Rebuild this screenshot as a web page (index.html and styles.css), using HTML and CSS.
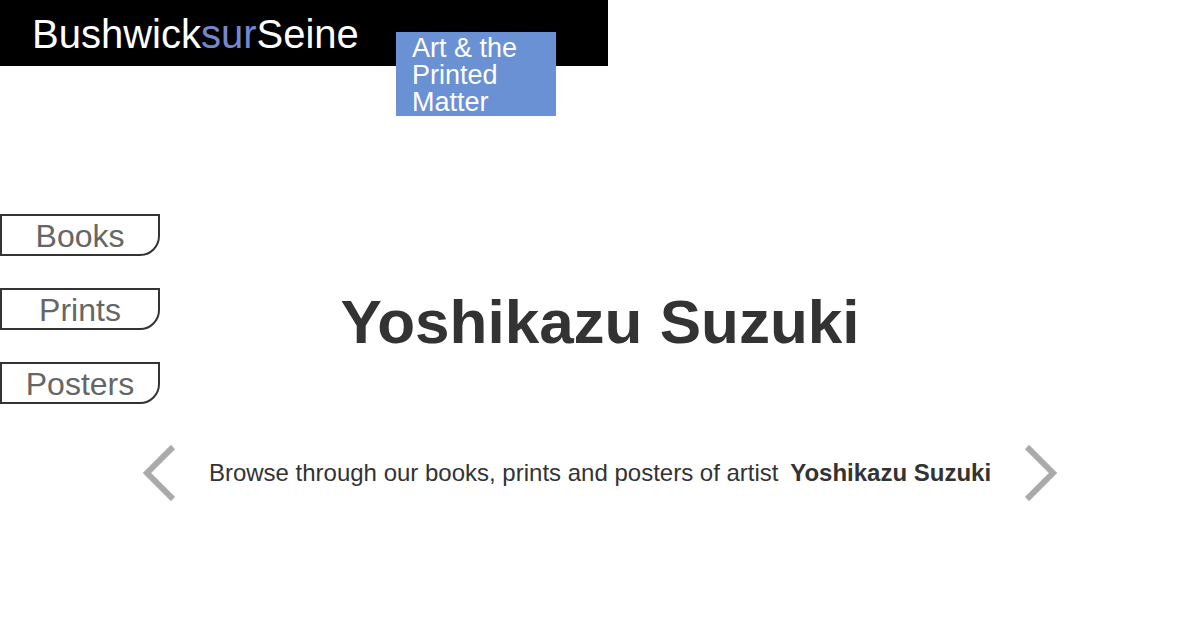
FILE: index.html
```html
<!DOCTYPE html>
<html lang="en">
<head>
<meta charset="utf-8">
<meta name="viewport" content="width=device-width, initial-scale=1">
<title>BushwicksurSeine</title>
<link rel="stylesheet" href="styles.css">
</head>
<body>
<header class="site-header">
  <a class="brand" href="#">Bushwick<span class="brand-accent">sur</span>Seine</a>
  <p class="tagline">Art &amp; the Printed Matter</p>
</header>
<div class="page">
  <nav class="categories" aria-label="Categories">
    <a class="category" href="#books">Books</a>
    <a class="category" href="#prints">Prints</a>
    <a class="category" href="#posters">Posters</a>
  </nav>
  <main class="artist">
    <h1 class="artist-name">Yoshikazu Suzuki</h1>
    <div class="browser">
      <button class="arrow" type="button" aria-label="Previous">
        <svg class="arrow-icon" viewBox="0 0 32 56" aria-hidden="true"><path d="M30 2 L4 28 L30 54"/></svg>
      </button>
      <p class="intro">Browse through our books, prints and posters of artist <strong class="intro-name">Yoshikazu Suzuki</strong></p>
      <button class="arrow" type="button" aria-label="Next">
        <svg class="arrow-icon" viewBox="0 0 32 56" aria-hidden="true"><path d="M2 2 L28 28 L2 54"/></svg>
      </button>
    </div>
  </main>
</div>
</body>
</html>
```
FILE: styles.css
```css
* {
  box-sizing: border-box;
}

body {
  margin: 0;
  background: #fff;
  color: #333;
  font-family: "Liberation Sans", Arial, sans-serif;
}

.site-header {
  position: relative;
  display: flex;
  align-items: center;
  width: 608px;
  max-width: 100%;
  padding: 14px 32px 12px;
  background: #000;
}

.brand {
  color: #fff;
  font-size: 40px;
  line-height: 40px;
  text-decoration: none;
}

.brand-accent {
  color: #7388d0;
}

.tagline {
  position: absolute;
  top: 32px;
  left: 396px;
  width: 160px;
  margin: 0;
  padding: 3px 16px 0;
  background: #6a91d4;
  color: #fff;
  font-size: 27px;
  line-height: 27px;
}

.page {
  display: grid;
  grid-template-columns: 160px 1fr;
  padding-top: 148px;
}

.categories {
  display: flex;
  flex-direction: column;
  grid-area: 1 / 1;
  gap: 32px;
  z-index: 1;
}

.category {
  padding-top: 2px;
  border: 2px solid #333;
  border-bottom-right-radius: 20px;
  color: #666;
  font-size: 32px;
  line-height: 36px;
  text-align: center;
  text-decoration: none;
}

.artist {
  grid-area: 1 / 1 / 2 / -1;
  padding-top: 68px;
}

.artist-name {
  margin: 0;
  font-size: 62px;
  line-height: 80px;
  text-align: center;
}

.browser {
  display: flex;
  align-items: center;
  justify-content: center;
  gap: 34px;
  margin-top: 83px;
}

.arrow {
  padding: 0;
  border: 0;
  background: none;
  cursor: pointer;
}

.arrow-icon {
  display: block;
  width: 32px;
  height: 56px;
  fill: none;
  stroke: #aaa;
  stroke-width: 6px;
}

.intro {
  margin: 0;
  font-size: 24px;
  line-height: 28px;
}

.intro-name {
  margin-left: 5px;
}
```
